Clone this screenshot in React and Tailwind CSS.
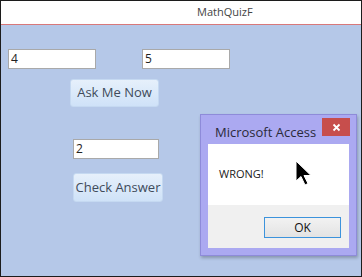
import React from 'react';

const font = { fontFamily: '"Open Sans", "Noto Sans", sans-serif' };

function TextBox({ value, className }) {
  return (
    <div className={`h-[20px] bg-white border border-[#a9a9a9] pl-[2px] text-[12px] leading-[18px] text-[#222] ${className}`}>
      {value}
    </div>
  );
}

function FormButton({ label, className }) {
  return (
    <div className={`flex items-center justify-center rounded-[3px] border border-[#c5d9f1] bg-gradient-to-b from-[#e6f0fb] to-[#cfe2f8] text-[13px] text-[#404b5a] ${className}`}>
      {label}
    </div>
  );
}

export default function App() {
  return (
    <div className="relative w-[362px] h-[277px] border border-[#1c1c1c] bg-[#b5c8e8] overflow-hidden" style={font}>
      {/* Title bar */}
      <div className="h-[23px] bg-white flex items-center pl-[196px] text-[11px] text-[#444]">MathQuizF</div>
      <div className="h-[1px] bg-[#d8787a]" />

      {/* Form body */}
      <div className="pl-[7px] pt-[24px] flex flex-col">
        <div className="flex">
          <TextBox value="4" className="w-[88px]" />
          <TextBox value="5" className="w-[88px] ml-[46px]" />
        </div>
        <FormButton label="Ask Me Now" className="w-[89px] h-[28px] ml-[62px] mt-[10px]" />
        <TextBox value="2" className="w-[86px] h-[19px] ml-[65px] mt-[32px]" />
        <FormButton label="Check Answer" className="w-[90px] h-[29px] ml-[65px] mt-[14px]" />
      </div>

      {/* Message box */}
      <div className="absolute left-[199px] top-[113px] w-[157px] h-[142px] bg-[#aba9f1] border border-[#8e8bd9] shadow-[1px_2px_3px_rgba(0,0,0,0.25)] flex flex-col">
        <div className="h-[29px] flex items-start pl-[14px]">
          <span className="flex-1 whitespace-nowrap text-[13px] leading-[34px] text-[#2a2a3a]">Microsoft Access</span>
          <div className="shrink-0 mt-[3px] mr-[6px] w-[28px] h-[18px] bg-[#c74e4c] flex items-center justify-center">
            <svg width="9" height="9" viewBox="0 0 9 9">
              <path d="M1.5 1.5L7.5 7.5M7.5 1.5L1.5 7.5" stroke="#fff" strokeWidth="1.8" />
            </svg>
          </div>
        </div>
        <div className="mx-[7px] flex-1 mb-[7px] flex flex-col">
          <div className="h-[61px] bg-white pl-[11px] flex items-center text-[11px] text-[#1a1a1a]">WRONG!</div>
          <div className="flex-1 bg-[#f0f0f0] flex justify-end pr-[8px] pt-[12px]">
            <div className="w-[77px] h-[21px] border border-[#3c93dc] bg-gradient-to-b from-[#f2f2f2] to-[#e3e3e3] flex items-center justify-center text-[12px] text-[#111]">
              OK
            </div>
          </div>
        </div>
      </div>

      {/* Mouse cursor */}
      <svg className="absolute left-[294px] top-[159px]" width="18" height="28" viewBox="0 0 18 28">
        <path d="M1 1 L1 21 L6 16.5 L10 25 L13 23.5 L9 15.5 L16 15.5 Z" fill="#000" stroke="#fff" strokeWidth="1" />
      </svg>
    </div>
  );
}
